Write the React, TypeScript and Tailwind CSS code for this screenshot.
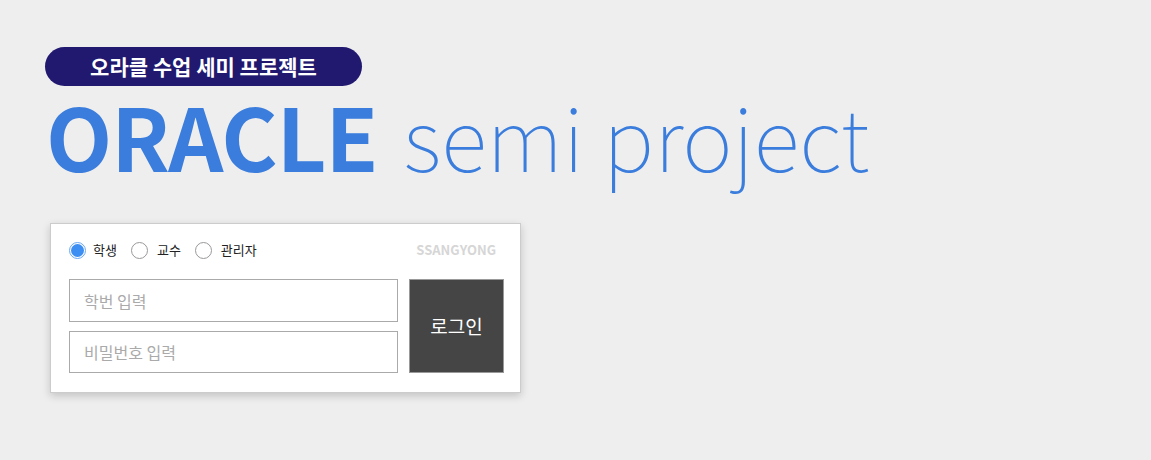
export default function App() {
  const font = { fontFamily: '"Noto Sans CJK KR", "Noto Sans", sans-serif' };
  return (
    <div className="w-[1151px] h-[460px] bg-[#eeeeee] pl-[45px] pt-[47px]" style={font}>
      <div className="w-[317px] h-[39px] rounded-full bg-[#21186f] flex items-center justify-center text-white text-[21px] font-bold">
        오라클 수업 세미 프로젝트
      </div>
      <h1 className="mt-[2px] ml-[1px] text-[#3b7ddd] text-[86px] leading-[94px] whitespace-nowrap">
        <span className="font-bold tracking-[-1px]">ORACLE</span>
        <span className="font-thin ml-[26px]">semi project</span>
      </h1>
      <div className="mt-[41px] ml-[5px] w-[471px] h-[170px] bg-white border border-[#cccccc] shadow-[0_3px_8px_rgba(0,0,0,0.18)] px-[18px] pt-[15px]">
        <div className="flex items-center h-[22px]">
          <label className="flex items-center text-[13px] text-[#222]">
            <span className="w-[17px] h-[17px] rounded-full border border-[#6aa8f5] flex items-center justify-center mr-[7px]">
              <span className="w-[13px] h-[13px] rounded-full bg-[#3d8ef2]" />
            </span>
            학생
          </label>
          <label className="flex items-center text-[13px] text-[#222] ml-[14px]">
            <span className="w-[17px] h-[17px] rounded-full border border-[#999] mr-[9px]" />
            교수
          </label>
          <label className="flex items-center text-[13px] text-[#222] ml-[14px]">
            <span className="w-[17px] h-[17px] rounded-full border border-[#999] mr-[9px]" />
            관리자
          </label>
          <span className="ml-auto mr-[6px] text-[13px] font-bold text-[#d6d6d6]">SSANGYONG</span>
        </div>
        <div className="flex mt-[18px]">
          <div className="flex flex-col gap-[9px]">
            <div className="w-[329px] h-[43px] border border-[#aaaaaa] flex items-center px-[14px] text-[16px] text-[#aaaaaa]">학번 입력</div>
            <div className="w-[329px] h-[42px] border border-[#aaaaaa] flex items-center px-[14px] text-[16px] text-[#aaaaaa]">비밀번호 입력</div>
          </div>
          <div className="shrink-0 ml-[11px] w-[95px] h-[94px] bg-[#444544] border border-[#999] flex items-center justify-center text-white text-[19px]">
            로그인
          </div>
        </div>
      </div>
    </div>
  );
}
